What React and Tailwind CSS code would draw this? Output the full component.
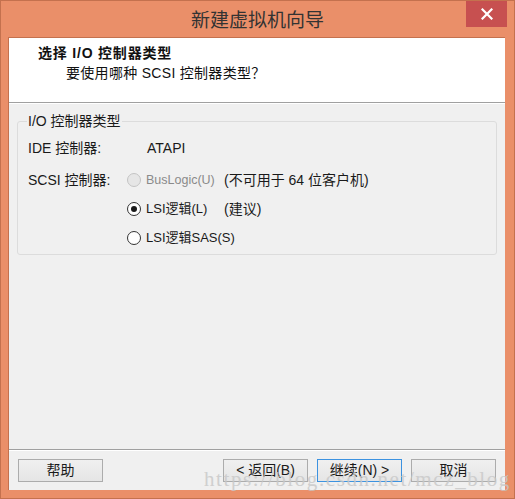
import React from "react";

const ui = { fontFamily: '"Liberation Sans", "Noto Sans CJK SC", sans-serif' };

function Radio({ checked, disabled }) {
  return (
    <span
      className={
        "flex h-[14px] w-[14px] shrink-0 items-center justify-center rounded-full border " +
        (disabled
          ? "border-[#c4c4c4] bg-[#e6e6e6]"
          : "border-[#333333] bg-white")
      }
    >
      {checked && <span className="h-[6px] w-[6px] rounded-full bg-[#1a1a1a]" />}
    </span>
  );
}

function Btn({ children, primary }) {
  return (
    <div
      className={
        "flex h-[23px] w-[85px] items-center justify-center border bg-gradient-to-b from-[#f0f0f0] to-[#e5e5e5] text-[14px] text-[#1a1a1a] " +
        (primary ? "border-[#3c92e0]" : "border-[#acacac]")
      }
    >
      {children}
    </div>
  );
}

export default function App() {
  return (
    <div
      className="relative flex h-[499px] w-[515px] flex-col border border-[#c4714e] bg-[#ea8f69]"
      style={ui}
    >
      {/* title bar */}
      <div className="relative flex h-[36px] items-center justify-center">
        <span className="text-[19px] text-[#333333]" style={{ fontFamily: '"Noto Sans CJK SC", sans-serif' }}>新建虚拟机向导</span>
        <div className="absolute right-[7px] top-0 flex h-[26px] w-[41px] items-center justify-center bg-[#c75050]">
          <svg width="12" height="12" viewBox="0 0 12 12">
            <path d="M1.5 1.5 L10.5 10.5 M10.5 1.5 L1.5 10.5" stroke="white" strokeWidth="2.2" strokeLinecap="square" />
          </svg>
        </div>
      </div>

      {/* client */}
      <div className="ml-[7px] mr-[9px] flex h-[453px] flex-col border-l border-t border-[#c4714e] bg-[#f0f0f0]">
        <div className="flex h-[64px] flex-col bg-white pl-[29px] pt-[6px] text-[14px] text-[#111111]">
          <div className="h-[19px] font-bold leading-[19px] tracking-[0.8px]">选择 I/O 控制器类型</div>
          <div className="mt-[1px] h-[19px] pl-[28px] leading-[19px] tracking-[0.3px]">要使用哪种 SCSI 控制器类型？</div>
        </div>
        <div className="h-px bg-[#a0a0a0]" />
        <div className="h-px bg-white" />

        <div className="flex-1 px-[8px] pt-[17px]">
          <div className="h-[134px] rounded-[3px] border border-[#dcdcdc] pl-[9px] text-[14px] text-[#1a1a1a]">
            <div className="-mt-[9px] w-fit bg-[#f0f0f0] px-[1px] leading-[16px]">I/O 控制器类型</div>
            <div className="mt-[11px] flex h-[16px] items-center leading-[16px]">
              <span className="w-[120px] pl-[1px]">IDE 控制器:</span>
              <span>ATAPI</span>
            </div>
            <div className="mt-[16px] flex h-[16px] items-center leading-[16px]">
              <span className="w-[100px] pl-[1px]">SCSI 控制器:</span>
              <span className="flex w-[97px] items-center gap-[5px]">
                <Radio disabled />
                <span className="text-[12.5px] text-[#8a8a8a]">BusLogic(U)</span>
              </span>
              <span>(不可用于 64 位客户机)</span>
            </div>
            <div className="mt-[13px] flex h-[16px] items-center leading-[16px]">
              <span className="w-[100px]" />
              <span className="flex w-[97px] items-center gap-[5px]">
                <Radio checked />
                <span className="text-[13px]">LSI逻辑(L)</span>
              </span>
              <span>(建议)</span>
            </div>
            <div className="mt-[13px] flex h-[16px] items-center leading-[16px]">
              <span className="w-[100px]" />
              <span className="flex items-center gap-[5px]">
                <Radio />
                <span className="text-[13px]">LSI逻辑SAS(S)</span>
              </span>
            </div>
          </div>
        </div>

        <div className="h-px bg-[#a0a0a0]" />
        <div className="h-px bg-white" />
        <div className="flex h-[39px] items-start pl-[9px] pr-[9px] pt-[8px]">
          <Btn>帮助</Btn>
          <div className="flex-1" />
          <div className="flex gap-[9px]">
            <Btn>&lt; 返回(B)</Btn>
            <Btn primary>继续(N) &gt;</Btn>
            <Btn>取消</Btn>
          </div>
        </div>
      </div>

      <div
        className="pointer-events-none absolute left-[203px] top-[466px] text-[21px] leading-[24px] tracking-[1.6px] text-[#c8c8c8] opacity-80"
        style={{ fontFamily: '"Liberation Serif", serif' }}
      >
        https://blog.csdn.net/mcz_blog
      </div>
    </div>
  );
}
